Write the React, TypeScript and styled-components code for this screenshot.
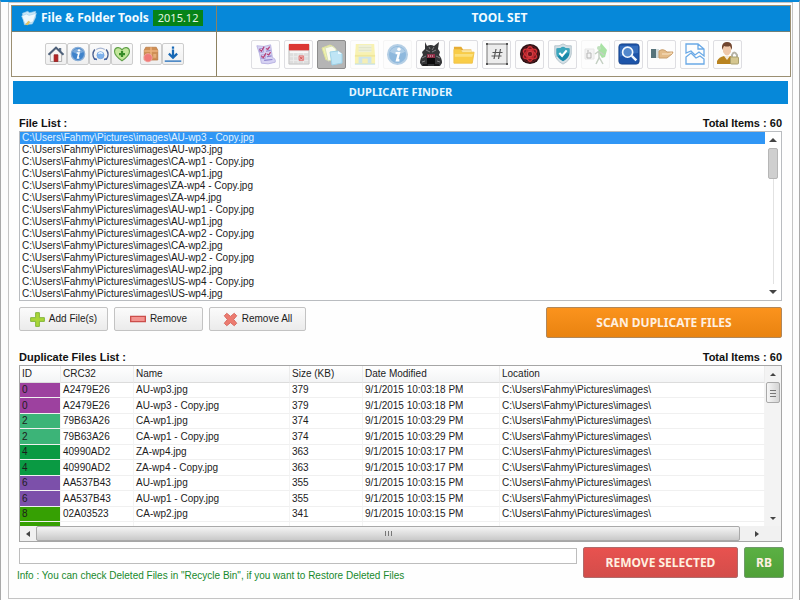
import React, { useState } from "react";
import styled, { createGlobalStyle, css } from "styled-components";

const uiFont = `"Liberation Sans", Arial, sans-serif`;
const headFont = `"Noto Sans", "Open Sans", sans-serif`;
const blue = "#0688d9";

const GlobalStyle = createGlobalStyle`
  * { box-sizing: border-box; }
  body { margin: 0; background: #fdfdfd; font: 10px/12px ${uiFont}; color: #1c1c1c; }
  button, input { font: inherit; color: inherit; margin: 0; }
`;

const Window = styled.div`
  min-height: 100vh;
  display: flex;
  flex-direction: column;
  border-top: 2px solid ${blue};
  border-left: 1px solid #a9a9a9;
  border-right: 1px solid #a9a9a9;
  padding: 0 6px 1px 7px;
`;

const Frame = styled.main`
  flex: 1;
  border: 1px solid #c4c4c4;
  padding: 2px 1px 2px 2px;
  background: #fefefe;
`;

const HeaderPanel = styled.header`
  display: grid;
  grid-template-columns: 204px 1fr;
  border: 1px solid #9b8f72;
`;

const HeaderGroup = styled.section<{ $divided?: boolean }>`
  display: flex;
  flex-direction: column;
  ${(p) => p.$divided && css`border-left: 1px solid #8d8262;`}
`;

const TitleBar = styled.h1<{ $start?: boolean }>`
  margin: 0;
  height: 26px;
  display: flex;
  align-items: center;
  justify-content: ${(p) => (p.$start ? "flex-start" : "center")};
  gap: 4px;
  padding: ${(p) => (p.$start ? "0 0 2px 9px" : "0 8px 2px 0")};
  background: ${blue};
  border-bottom: 1px solid #6f8078;
  color: #f2fbff;
  font: bold ${(p) => (p.$start ? "11px" : "12px")}/16px ${headFont};
  white-space: nowrap;
`;

const AppName = styled.span`
  font-size: 12px;
`;

const Version = styled.span`
  background: #068318;
  color: #e4f6e4;
  font-weight: normal;
  padding: 0 5px;
`;

const QuickBar = styled.div`
  height: 44px;
  display: flex;
  align-items: center;
  padding-left: 33px;
`;

const QuickGroup = styled.div`
  display: flex;
  margin-right: 7px;
`;

const QuickButton = styled.button`
  width: 22px;
  height: 22px;
  padding: 0;
  display: grid;
  place-items: center;
  border: 1px solid #cdcdcd;
  border-radius: 2px;
  background: linear-gradient(#fbfbfb, #efefef);
`;

const ToolBar = styled.div`
  height: 44px;
  display: flex;
  align-items: center;
  justify-content: center;
  gap: 4px;
  padding-right: 14px;
`;

const ToolButton = styled.button<{ $active?: boolean; $faint?: boolean }>`
  width: 29px;
  height: 29px;
  padding: 0;
  display: grid;
  place-items: center;
  border: 1px solid ${(p) => (p.$active ? "#8c8c8c" : p.$faint ? "#f5f5f5" : "#dedee2")};
  border-radius: 2px;
  background: ${(p) => (p.$active ? "#b5b5b5" : "#fdfdfd")};
`;

const SectionTitle = styled.h2`
  margin: 4px 3px 0 2px;
  height: 23px;
  padding-bottom: 1px;
  display: grid;
  place-items: center;
  background: ${blue};
  color: #e6f6ff;
  font: bold 11px/16px ${headFont};
`;

const Content = styled.div`
  padding: 12px 9px 0 8px;
`;

const Caption = styled.div`
  display: flex;
  justify-content: space-between;
  height: 15px;
  font: bold 11px/14px ${uiFont};
  color: #111;
`;

const ListPanel = styled.div`
  display: flex;
  height: 170px;
  border: 1px solid #b9bcc0;
  background: #fff;
`;

const FileOptions = styled.ul`
  flex: 1;
  margin: 0;
  padding: 0;
  list-style: none;
  overflow: hidden;
`;

const FileOption = styled.li<{ $selected: boolean }>`
  height: 12px;
  padding-left: 2px;
  line-height: 12px;
  white-space: nowrap;
  background: ${(p) => (p.$selected ? "#3096f5" : "transparent")};
  color: ${(p) => (p.$selected ? "#e2f3ff" : "#1c1c1c")};
`;

const VerticalScroll = styled.div<{ $plain?: boolean }>`
  width: 16px;
  display: flex;
  flex-direction: column;
  align-items: center;
  background: ${(p) => (p.$plain ? "#fff" : "#f3f3f3")};
`;

const ScrollArrow = styled.button`
  flex: none;
  width: 16px;
  height: 16px;
  padding: 0;
  border: 0;
  background: transparent;
  display: grid;
  place-items: center;
`;

const PlainTrack = styled.div`
  flex: 1;
  width: 10px;
  background: linear-gradient(#e2e2e2, #e2e2e2) center / 1px 100% no-repeat;
`;

const EmptyTrack = styled.div`
  flex: 1;
`;

const PlainThumb = styled.div`
  height: 31px;
  border: 1px solid #b6b6b6;
  border-radius: 2px;
  background: #cfcfcf;
`;

const GripThumb = styled.div`
  width: 14px;
  height: 21px;
  display: grid;
  place-items: center;
  border: 1px solid #a9a9a9;
  border-radius: 2px;
  background: linear-gradient(90deg, #f6f6f6, #d4d4d4);
`;

const ActionRow = styled.div`
  display: flex;
  align-items: flex-start;
  gap: 6px;
  padding: 6px 0 12px;
`;

const FileButton = styled.button<{ $wide?: boolean }>`
  width: ${(p) => (p.$wide ? "97px" : "89px")};
  height: 24px;
  padding: 0;
  display: flex;
  align-items: center;
  justify-content: center;
  gap: 4px;
  border: 1px solid #c3c3c3;
  border-radius: 2px;
  background: linear-gradient(#fbfbfb, #ebebeb);
`;

const tones = {
  orange: ["#fb931d", "#e98310", "#b0875a"],
  red: ["#e8524f", "#d34d4a", "#b06a6a"],
  green: ["#5bb043", "#50a038", "#6f9a6a"],
};

const MainButton = styled.button<{ $tone: keyof typeof tones; $width: number; $end?: boolean }>`
  width: ${(p) => p.$width}px;
  height: 31px;
  padding: 0;
  flex: none;
  margin-left: ${(p) => (p.$end ? "auto" : "0")};
  border: 1px solid ${(p) => tones[p.$tone][2]};
  border-radius: 2px;
  background: linear-gradient(${(p) => tones[p.$tone][0]}, ${(p) => tones[p.$tone][1]});
  color: #fff0e0;
  font: bold 12px/16px ${headFont};
`;

const GridPanel = styled.div`
  border: 1px solid #a6a6a6;
  background: #fff;
`;

const GridBody = styled.div`
  display: flex;
  height: 160px;
  overflow: hidden;
`;

const TableArea = styled.div`
  flex: 1;
  overflow: hidden;
`;

const Table = styled.table`
  width: 100%;
  table-layout: fixed;
  border-collapse: separate;
  border-spacing: 0;
`;

const HeadCell = styled.th`
  height: 17px;
  padding: 0 2px;
  text-align: left;
  font-weight: normal;
  white-space: nowrap;
  background: linear-gradient(#fff, #f3f4f5);
  border-bottom: 1px solid #dcdcdc;
  border-right: 1px solid #ececec;
`;

const BodyRow = styled.tr`
  height: 15px;
  &:nth-child(even) { height: 16px; }
`;

const Cell = styled.td<{ $fill?: string }>`
  padding: 0 2px;
  line-height: 14px;
  white-space: nowrap;
  border-bottom: 1px solid #f0f0f0;
  border-right: 1px solid #f4f4f4;
  background: ${(p) => p.$fill ?? "transparent"};
  background-clip: padding-box;
`;

const HorizontalScroll = styled.div`
  display: flex;
  height: 15px;
  background: #f1f1f1;
  padding-right: 16px;
`;

const WideThumb = styled.div`
  flex: 1;
  display: grid;
  place-items: center;
  margin-right: 9px;
  border: 1px solid #a9a9a9;
  border-radius: 2px;
  background: linear-gradient(#f4f4f4, #c9c9c9);
`;

const Footer = styled.footer`
  display: flex;
  gap: 6px;
  padding-top: 5px;
  margin-right: -2px;
`;

const StatusColumn = styled.div`
  flex: 1;
`;

const PathInput = styled.input`
  display: block;
  width: 100%;
  height: 16px;
  margin-top: 1px;
  padding: 0 2px;
  border: 1px solid #bdbdbd;
  background: #fff;
`;

const Info = styled.p`
  margin: 5px 0 0 -2px;
  line-height: 14px;
  color: #17892c;
`;

const Svg = ({ size = 22, children }: { size?: number; children: React.ReactNode }) => (
  <svg width={size} height={size} viewBox="0 0 24 24" fill="none" aria-hidden="true">{children}</svg>
);

const AppLogo = () => (
  <Svg size={16}>
    <path d="M2 5l8-3 3 2 9-2v9l-5 10-12 1z" fill="#c9e7f8" stroke="#8cc6e8" />
    <path d="M1 9l7-3 4 2 11-3-5 13-12 3z" fill="#eef8fd" stroke="#9fcdea" />
    <path d="M6 22l5-6 3 2-4 5z" fill="#e3c465" />
  </Svg>
);

const Home = () => (
  <Svg size={18}>
    <path d="M16 4h3v6h-3z" fill="#63748c" />
    <path d="M4.500 12L12 5l7.500 7v10h-15z" fill="#f6f4f2" stroke="#9b9b9b" />
    <path d="M2 13L12 3.500 22 13" stroke="#4d6079" strokeWidth="2.600" />
    <path d="M9.500 13h5v9h-5z" fill="#b62424" stroke="#8f1c1c" />
  </Svg>
);

const InfoOrb = ({ pale }: { pale?: boolean }) => (
  <Svg size={pale ? 23 : 16}>
    <circle cx="12" cy="12" r="10" fill={pale ? "#8fb9dd" : "#3f83cb"} stroke={pale ? "#b5cfe5" : "#8aaed6"} strokeWidth="2" />
    <path d="M4 9a9 9 0 0116 0q-8 5-16 0z" fill="#fff" opacity=".3" />
    <circle cx="13.500" cy="6.500" r="1.800" fill="#fff" />
    <path d="M10 10.500h3.500l-2 7.500h2.500" stroke="#fff" strokeWidth="2.400" />
  </Svg>
);

const Signal = () => (
  <Svg size={17}>
    <circle cx="12" cy="13" r="5" fill="#7db1ec" stroke="#6c9fdf" />
    <path d="M9 11q3-3 6 0" stroke="#e7f4ff" strokeWidth="2" />
    <path d="M4 5a11 11 0 000 14M20 5a11 11 0 010 14" stroke="#4c6292" strokeWidth="2.200" />
    <path d="M6 5q6-4 12 0" stroke="#a5b4d2" strokeWidth="1.500" />
    <path d="M3 18l4 1M21 18l-4 1" stroke="#3f5f9f" strokeWidth="2" />
  </Svg>
);

const Heart = () => (
  <Svg size={18}>
    <path d="M12 21C5 16 2 12.500 2 8.500 2 3 9 1.500 12 6.500 15 1.500 22 3 22 8.500c0 4-3 7.500-10 12.500z" fill="#c3e79b" stroke="#62a14b" strokeWidth="1.500" />
    <path d="M12 8v8M8 12h8" stroke="#358b26" strokeWidth="3" />
  </Svg>
);

const Package = () => (
  <Svg size={18}>
    <path d="M5 3h14l2 4v13H3V7z" fill="#cf8f55" stroke="#b77742" />
    <path d="M3 8h18M12 3v17" stroke="#edb27d" strokeWidth="2" />
    <circle cx="8" cy="17" r="5.500" fill="#f07a78" stroke="#f4aaa5" />
    <path d="M15 12h4v5h-4z" fill="#e5ad79" />
  </Svg>
);

const Download = () => (
  <Svg size={18}>
    <path d="M12 2v3M12 6v10M6.500 11.500L12 17l5.500-5.500" stroke="#1768b5" strokeWidth="3" />
    <path d="M1 21.500h22" stroke="#3b7dc0" strokeWidth="2" />
  </Svg>
);

const Checklist = () => (
  <Svg>
    <path d="M2 3q8 2 15-1l2 14q4 1 3 5-8 3-15 1L5 12z" fill="#d6d2f3" stroke="#b7b1e0" />
    <path d="M5 6h4v4H5zM7 13h4v4H7z" fill="#f4f0ff" stroke="#a094d2" />
    <path d="M5 7l2 2 3-5M7 14l2 2 3-5M12 6l2 1 2-3M13 12l2 1 2-3" stroke="#b54178" strokeWidth="1.300" />
    <path d="M12 9l5-1M13 15l5-1M10 19l9-1" stroke="#8d82cb" strokeWidth="1.300" />
  </Svg>
);

const Calendar = () => (
  <Svg>
    <path d="M1 2h22v21H1z" fill="#dedede" stroke="#c2c2c2" />
    <path d="M1 1h22v7H1z" fill="#dc3733" />
    <path d="M2 9h20v2H2z" fill="#f8f8f8" />
    <path d="M2 15h20M2 19h20M6 11v11M11 11v11M17 11v11" stroke="#ececec" />
    <path d="M12 14h5v5h-5z" fill="#efb4b4" stroke="#e27d7d" />
    <path d="M13 15l3 3M16 15l-3 3" stroke="#cf4a4a" />
  </Svg>
);

const Copies = () => (
  <Svg size={24}>
    <path d="M2 6l8-3 4 2 1 10-9 3z" fill="#eff1ac" stroke="#dde09c" />
    <path d="M5 6l7-2 4 3v10l-8 2z" fill="#fafbed" stroke="#d9e0b4" />
    <path d="M10 10l8-1 4 3v9l-10 2z" fill="#bfe5f5" stroke="#9ed3e8" />
    <path d="M18 9v3h4z" fill="#edfaff" />
  </Svg>
);

const Floppy = () => (
  <Svg>
    <path d="M2 1h20l1 14v8H1v-8z" fill="#f8f2b2" />
    <path d="M5 2h14v8H5z" fill="#eef0d8" />
    <path d="M5 5h14M5 8h14" stroke="#dde2c8" />
    <path d="M1 13h22v2H1z" fill="#f0e79c" />
    <path d="M5 15h14v7H5z" fill="#cfe4e9" /><path d="M9 17h6v6H9z" fill="#f5efb6" />
    <path d="M1 23h22" stroke="#b4d8e3" />
  </Svg>
);

const Beast = () => (
  <Svg size={24}>
    <path d="M6 0l2 4q4-2 7 0l5-4-1 7 2 3-1 3q3 3 3 8l-2 3H3l-2-3q0-5 3-8l-1-3 3-3z" fill="#343537" />
    <path d="M7 8l4 2M17 8l-4 2M3 16l4-2M21 16l-4-2M3 20l3-1M21 20l-3-1M10 5l1 2M15 5l-2 3" stroke="#808183" />
    <path d="M8 12h8v4H8z" fill="#8f3149" /><path d="M9 14h6" stroke="#ecc9d1" strokeDasharray="1 1" />
    <path d="M8 16h8v6H8z" fill="#0c0c0d" />
    <path d="M4 23h5M15 23h5" stroke="#1b1b1c" strokeWidth="2" />
  </Svg>
);

const Folder = () => (
  <Svg>
    <path d="M1 4h8l2 3h9v4H1z" fill="#e6ac32" />
    <path d="M4 8h16v6H4z" fill="#fff6c9" />
    <path d="M1 7h7l2 3h13l-2 12H1z" fill="#f9cd47" stroke="#f0c34a" />
    <path d="M2 12h20l-1 3H2z" fill="#fbdf7c" />
  </Svg>
);

const Hash = () => (
  <Svg size={24}>
    <path d="M2 2h20v20H2z" fill="#ececec" stroke="#777" />
    <path d="M1 1h2v2H1zM21 1h2v2h-2zM1 21h2v2H1zM21 21h2v2h-2z" fill="#555" />
    <path d="M11 7l-2 10M15.500 7l-2 10M7.500 10.500h10M6.500 14h10" stroke="#555" strokeWidth="1.200" />
  </Svg>
);

const RedSeal = () => (
  <Svg>
    <circle cx="12" cy="12" r="11" fill="#2a1013" />
    <circle cx="12" cy="12" r="9" stroke="#6b1d22" />
    {[0, 60, 120].map((a) => (
      <ellipse key={a} cx="12" cy="12" rx="4" ry="8" fill="#b3232b" fillOpacity=".6" stroke="#d43238" strokeWidth="1.300" transform={`rotate(${a} 12 12)`} />
    ))}
    <circle cx="12" cy="12" r="3" fill="#6d161c" stroke="#e2474b" />
  </Svg>
);

const Shield = () => (
  <Svg>
    <path d="M12 1q4 3 9 2v9q-1 7-9 11-8-4-9-11V3q5 1 9-2z" fill="#d3e0e6" stroke="#b3c2c9" />
    <path d="M12 4q3 2 7 2v6q-1 5-7 8-6-3-7-8V6q4 0 7-2z" fill="#1788a8" />
    <path d="M12 4q3 2 7 2v5q-7 0-14 4V6q4 0 7-2z" fill="#3ba6bd" />
    <path d="M8 11l3 3 5-6" stroke="#fff" strokeWidth="2.300" />
  </Svg>
);

const Exit = () => (
  <Svg size={24}>
    <path d="M1 7h9v10H1z" fill="#f4f4f4" stroke="#e6e6e6" /><path d="M3 11h4v5H3zM3 9h2" stroke="#b5b5b5" />
    <path d="M17 1l6 7-2 7-3 1-4-6z" fill="#a8e2a4" />
    <circle cx="15" cy="6" r="2" fill="#bfe0bc" />
    <path d="M15 9l-4 3M15 9v7l-3 6M15 15l4 7M16 10l4 3" stroke="#c4d0c3" strokeWidth="1.500" />
  </Svg>
);

const Search = () => (
  <Svg>
    <rect x="1" y="1" width="22" height="22" rx="3" fill="#1d54a9" stroke="#174389" />
    <path d="M2 3h20v8Q12 11 2 15z" fill="#4077c4" opacity=".7" />
    <circle cx="10.500" cy="10" r="5.500" fill="#5388cc" stroke="#f2f8ff" strokeWidth="1.800" />
    <path d="M15 14l5 5" stroke="#f2f8ff" strokeWidth="2.600" />
  </Svg>
);

const Hand = () => (
  <Svg size={24}>
    <path d="M1 7h5v9H1z" fill="#56737b" /><path d="M6 7h3v9H6z" fill="#d3dcdc" />
    <path d="M9 9q4-3 8 1h6l-1 2-5 4H9z" fill="#e3bb88" stroke="#c99d6a" />
    <path d="M12 12h6l4-1" stroke="#f3d8b2" strokeWidth="1.500" />
  </Svg>
);

const TornPage = () => (
  <Svg size={24}>
    <path d="M3 11V2h12l6 5v7l-5-4-4 3-4-4zM15 2v5h6M3 22v-7l5-4 5 5 4-2 4 3v5z" stroke="#6aa9e6" strokeWidth="1.300" />
  </Svg>
);

const UserLock = () => (
  <Svg size={24}>
    <path d="M1 22v-3q2-4 7-5h6q4 1 5 5v3z" fill="#b98320" />
    <path d="M8 14l3 4 3-4z" fill="#f4e9d9" />
    <path d="M7 4q4-4 8 0v6q-4 7-8 0z" fill="#efc8aa" />
    <path d="M6 8V4q1-4 5-4 5 0 5 5v3l-2-4q-3 1-6 0z" fill="#70452f" />
    <path d="M16 16v-3q2-5 5 0v3" stroke="#b5b2a6" strokeWidth="2" />
    <rect x="14.500" y="15" width="8" height="7" rx="1" fill="#d5c68f" stroke="#aaa06f" />
  </Svg>
);

const Plus = () => <Svg size={15}><path d="M9 1h6v8h8v6h-8v8H9v-8H1V9h8z" fill="#a9d638" stroke="#7fb435" strokeWidth="1.500" /></Svg>;
const Minus = () => <Svg size={16}><path d="M1 8h22v8H1z" fill="#f3938f" stroke="#cb4e4b" strokeWidth="2" /></Svg>;
const Cross = () => <Svg size={15}><path d="M6 2l6 5 6-5 4 4-5 6 5 6-4 4-6-5-6 5-4-4 5-6-5-6z" fill="#ec7b70" stroke="#d66a60" strokeWidth="1.500" /></Svg>;

const arrowPaths = { up: "M0 4l4-4 4 4z", down: "M0 0l4 4 4-4z", left: "M4 0v6L0 3z", right: "M0 0v6l4-3z" };
const Arrow = ({ dir, small }: { dir: keyof typeof arrowPaths; small?: boolean }) => {
  const upright = dir === "up" || dir === "down";
  return (
    <svg width={upright ? (small ? 6 : 8) : 4} height={upright ? (small ? 3 : 4) : 6} viewBox={upright ? "0 0 8 4" : "0 0 4 6"} aria-hidden="true">
      <path d={arrowPaths[dir]} fill="#444" />
    </svg>
  );
};

const Grip = ({ upright }: { upright?: boolean }) => (
  <svg width="8" height="8" viewBox="0 0 8 8" stroke="#777" aria-hidden="true">
    <path d={upright ? "M1.500 1v5M4.500 1v5M7.500 1v5" : "M1 1.500h6M1 4.500h6M1 7.500h6"} />
  </svg>
);

const folder = "C:\\Users\\Fahmy\\Pictures\\images\\";
const files = ["AU-wp3", "CA-wp1", "ZA-wp4", "AU-wp1", "CA-wp2", "AU-wp2", "US-wp4"]
  .flatMap((n) => [`${n} - Copy.jpg`, `${n}.jpg`]);

const rows = [
  { id: 0, crc: "A2479E26", name: "AU-wp3.jpg", size: 379, time: "10:03:18", fill: "#9d419f" },
  { id: 0, crc: "A2479E26", name: "AU-wp3 - Copy.jpg", size: 379, time: "10:03:18", fill: "#9d419f" },
  { id: 2, crc: "79B63A26", name: "CA-wp1.jpg", size: 374, time: "10:03:29", fill: "#3cb478" },
  { id: 2, crc: "79B63A26", name: "CA-wp1 - Copy.jpg", size: 374, time: "10:03:29", fill: "#3cb478" },
  { id: 4, crc: "40990AD2", name: "ZA-wp4.jpg", size: 363, time: "10:03:17", fill: "#0a9a43" },
  { id: 4, crc: "40990AD2", name: "ZA-wp4 - Copy.jpg", size: 363, time: "10:03:17", fill: "#0a9a43" },
  { id: 6, crc: "AA537B43", name: "AU-wp1.jpg", size: 355, time: "10:03:15", fill: "#7c50aa" },
  { id: 6, crc: "AA537B43", name: "AU-wp1 - Copy.jpg", size: 355, time: "10:03:15", fill: "#7c50aa" },
  { id: 8, crc: "02A03523", name: "CA-wp2.jpg", size: 341, time: "10:03:15", fill: "#36a003" },
];

const quickGroups = [
  [["Home", <Home />], ["About", <InfoOrb />], ["Updates", <Signal />], ["Donate", <Heart />]],
  [["Products", <Package />], ["Download", <Download />]],
] as [string, React.ReactNode][][];

const tools: { label: string; icon: React.ReactNode; faint?: boolean }[] = [
  { label: "Batch list", icon: <Checklist /> },
  { label: "Date changer", icon: <Calendar /> },
  { label: "Duplicate finder", icon: <Copies /> },
  { label: "Save list", icon: <Floppy />, faint: true },
  { label: "File information", icon: <InfoOrb pale />, faint: true },
  { label: "File crusher", icon: <Beast /> },
  { label: "Folder tools", icon: <Folder /> },
  { label: "Hash", icon: <Hash /> },
  { label: "Seal", icon: <RedSeal /> },
  { label: "Protect", icon: <Shield /> },
  { label: "Extract", icon: <Exit />, faint: true },
  { label: "Search", icon: <Search /> },
  { label: "Take ownership", icon: <Hand /> },
  { label: "Split file", icon: <TornPage /> },
  { label: "Lock", icon: <UserLock /> },
];

export default function App() {
  const [selected, setSelected] = useState(0);
  const [tool, setTool] = useState(2);
  return (
    <>
      <GlobalStyle />
      <Window>
        <Frame>
          <HeaderPanel>
            <HeaderGroup>
              <TitleBar $start><AppLogo /><AppName>File &amp; Folder Tools</AppName><Version>2015.12</Version></TitleBar>
              <QuickBar>
                {quickGroups.map((group, i) => (
                  <QuickGroup key={i}>
                    {group.map(([label, icon]) => <QuickButton key={label} aria-label={label}>{icon}</QuickButton>)}
                  </QuickGroup>
                ))}
              </QuickBar>
            </HeaderGroup>
            <HeaderGroup $divided>
              <TitleBar as="h2">TOOL SET</TitleBar>
              <ToolBar>
                {tools.map((t, i) => (
                  <ToolButton key={t.label} aria-label={t.label} $active={i === tool} $faint={t.faint} onClick={() => setTool(i)}>{t.icon}</ToolButton>
                ))}
              </ToolBar>
            </HeaderGroup>
          </HeaderPanel>
          <SectionTitle>DUPLICATE FINDER</SectionTitle>
          <Content>
            <Caption><span id="files-caption">File List :</span><span>Total Items : 60</span></Caption>
            <ListPanel>
              <FileOptions role="listbox" aria-labelledby="files-caption">
                {files.map((f, i) => (
                  <FileOption key={f} role="option" aria-selected={i === selected} $selected={i === selected} onClick={() => setSelected(i)}>{folder + f}</FileOption>
                ))}
              </FileOptions>
              <VerticalScroll $plain>
                <ScrollArrow aria-label="Scroll up"><Arrow dir="up" /></ScrollArrow>
                <PlainTrack><PlainThumb /></PlainTrack>
                <ScrollArrow aria-label="Scroll down"><Arrow dir="down" /></ScrollArrow>
              </VerticalScroll>
            </ListPanel>
            <ActionRow>
              <FileButton><Plus />Add File(s)</FileButton>
              <FileButton><Minus />Remove</FileButton>
              <FileButton $wide><Cross />Remove All</FileButton>
              <MainButton $tone="orange" $width={236} $end>SCAN DUPLICATE FILES</MainButton>
            </ActionRow>
            <Caption><span id="grid-caption">Duplicate Files List :</span><span>Total Items : 60</span></Caption>
            <GridPanel>
              <GridBody>
                <TableArea>
                  <Table aria-labelledby="grid-caption">
                    <colgroup>
                      {[41, 73, 156, 73, 137].map((w, i) => <col key={i} width={w} />)}
                      <col />
                    </colgroup>
                    <thead>
                      <tr>{["ID", "CRC32", "Name", "Size (KB)", "Date Modified", "Location"].map((h) => <HeadCell key={h}>{h}</HeadCell>)}</tr>
                    </thead>
                    <tbody>
                      {rows.map((r) => (
                        <BodyRow key={r.name}>
                          <Cell $fill={r.fill}>{r.id}</Cell>
                          <Cell>{r.crc}</Cell>
                          <Cell>{r.name}</Cell>
                          <Cell>{r.size}</Cell>
                          <Cell>9/1/2015 {r.time} PM</Cell>
                          <Cell>{folder}</Cell>
                        </BodyRow>
                      ))}
                      <BodyRow><Cell $fill="#36a003" /><Cell /><Cell /><Cell /><Cell /><Cell /></BodyRow>
                    </tbody>
                  </Table>
                </TableArea>
                <VerticalScroll>
                  <ScrollArrow aria-label="Scroll up"><Arrow dir="up" small /></ScrollArrow>
                  <GripThumb><Grip /></GripThumb>
                  <EmptyTrack />
                  <ScrollArrow aria-label="Scroll down"><Arrow dir="down" small /></ScrollArrow>
                </VerticalScroll>
              </GridBody>
              <HorizontalScroll>
                <ScrollArrow aria-label="Scroll left"><Arrow dir="left" /></ScrollArrow>
                <WideThumb><Grip upright /></WideThumb>
                <ScrollArrow aria-label="Scroll right"><Arrow dir="right" /></ScrollArrow>
              </HorizontalScroll>
            </GridPanel>
            <Footer>
              <StatusColumn>
                <PathInput aria-label="Selected file" />
                <Info>Info : You can check Deleted Files in "Recycle Bin", if you want to Restore Deleted Files</Info>
              </StatusColumn>
              <MainButton $tone="red" $width={155}>REMOVE SELECTED</MainButton>
              <MainButton $tone="green" $width={40}>RB</MainButton>
            </Footer>
          </Content>
        </Frame>
      </Window>
    </>
  );
}
